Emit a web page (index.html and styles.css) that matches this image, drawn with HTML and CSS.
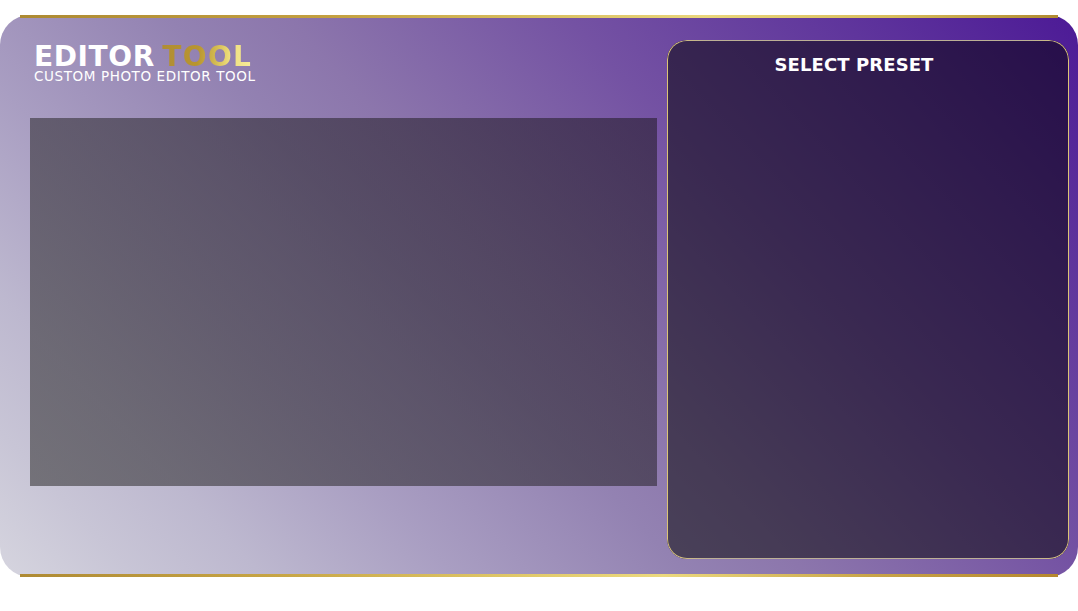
FILE: index.html
```html
<!DOCTYPE html>
<html lang="en">
<head>
<meta charset="utf-8">
<title>Editor Tool</title>
<link rel="stylesheet" href="styles.css">
</head>
<body>
<main class="card">
  <div class="strip"></div>
  <div class="content">
    <section class="left">
      <header class="brand">
        <h1 class="title">EDITOR <span class="gold">TOOL</span></h1>
        <p class="subtitle">CUSTOM PHOTO EDITOR TOOL</p>
      </header>
      <div class="preview"></div>
    </section>
    <aside class="panel">
      <h2 class="panel-title">SELECT PRESET</h2>
    </aside>
  </div>
  <div class="strip strip-bottom"></div>
</main>
</body>
</html>
```
FILE: styles.css
```css
* { box-sizing: border-box; }
html, body { margin: 0; height: 100%; background: #fff; }
body { padding-top: 15px; font-family: "DejaVu Sans", Inter, sans-serif; overflow: hidden; }
.card {
  width: 1078px; height: 562px; border-radius: 30px;
  display: flex; flex-direction: column;
  background: linear-gradient(47deg, #d6d5df 0%, #c8c5d6 8.5%, #bdb8cf 16.5%, #a99ec2 28.5%, #9382b2 43%, #8c76ac 50.5%, #7452a3 68%, #5f359c 85%, #4c1a96 100%);
}
.strip { height: 3px; margin: 0 20px; flex: none;
  background: linear-gradient(90deg, #ad8a32 0%, #c4a040 30%, #d9bf60 50%, #ead67c 66%, #d8bd5c 84%, #b08a30 100%); }
.strip-bottom { background: linear-gradient(90deg, #ae8a33 0%, #c7a545 25%, #e2cb6c 50%, #ecd97e 62%, #c8a448 82%, #b5872e 100%); }
.content { flex: 1; min-height: 0; display: flex; padding: 22px 9px 15px 30px; gap: 10px; }
.left { width: 627px; flex: none; display: flex; flex-direction: column; }
.brand { padding: 4px 0 0 4px; height: 78px; }
.title { margin: 0; font-size: 28px; line-height: 25px; font-weight: 700; color: #fff; letter-spacing: 0.6px; word-spacing: -3px; white-space: nowrap; }
.gold { letter-spacing: 1.4px; background: linear-gradient(95deg, #b08d35 0%, #b8952f 40%, #d4bc52 60%, #efdf7e 75%, #f7ec9c 100%);
  -webkit-background-clip: text; background-clip: text; color: transparent; }
.subtitle { margin: 0; font-size: 13.5px; line-height: 14px; font-weight: 400; color: #fff; letter-spacing: 0.6px; white-space: nowrap; }
.preview { height: 368px; background: linear-gradient(47deg, rgba(58, 57, 58, 0.6), rgba(50, 46, 54, 0.6) 50%, rgba(40, 30, 48, 0.62)); }
.panel { position: relative; flex: 1; border-radius: 20px; padding: 13px 28px 0 0; background: rgba(0, 0, 0, 0.5); }
.panel::before { content: ""; position: absolute; inset: 0; border-radius: 20px; padding: 1px;
  background: linear-gradient(to right, #dcc574, #bdb096 10%, #bdb096 90%, #dcc574);
  -webkit-mask: linear-gradient(#000 0 0) content-box, linear-gradient(#000 0 0);
  -webkit-mask-composite: xor; mask-composite: exclude; }
.panel-title { margin: 0; text-align: center; font-size: 18px; line-height: 24px; font-weight: 700; color: #fff; letter-spacing: 0.1px; }
```
